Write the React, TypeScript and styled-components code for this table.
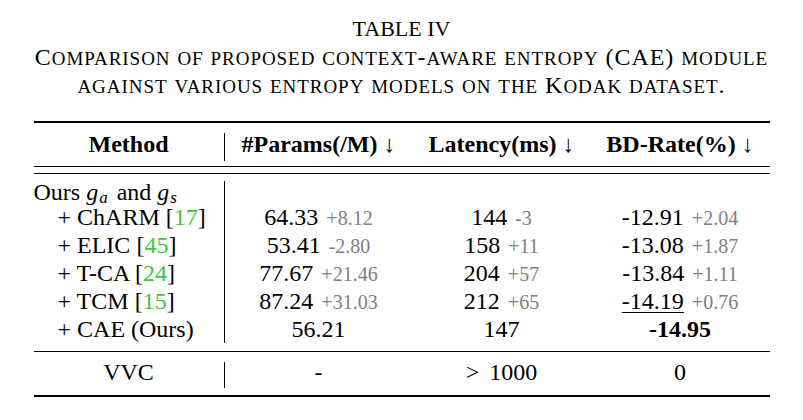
import React from "react";
import styled, { createGlobalStyle } from "styled-components";

const GlobalStyle = createGlobalStyle`
  html, body {
    margin: 0;
    padding: 0;
    background: #ffffff;
  }
  body {
    font-family: "Liberation Serif", "Times New Roman", serif;
    color: #000000;
  }
`;

const Page = styled.div`
  width: 803px;
  height: 420px;
  box-sizing: border-box;
  padding-top: 15px;
  display: flex;
  flex-direction: column;
  align-items: center;
  overflow: hidden;
`;

const Caption = styled.div`
  display: flex;
  flex-direction: column;
  align-items: center;
`;

const TableNumber = styled.div`
  font-size: 22px;
  height: 28px;
  line-height: 28px;
`;

const CaptionLine = styled.div`
  font-size: 24px;
  height: 28px;
  line-height: 28px;
  letter-spacing: 0.95px;
  white-space: nowrap;
`;

const SmallCap = styled.span`
  font-size: 19px;
  line-height: 1;
  text-transform: uppercase;
`;

const Table = styled.div`
  width: 736px;
  margin-top: 22px;
  border-top: 2px solid #000;
  border-bottom: 2px solid #000;
  font-size: 24px;
`;

const Section = styled.div<{ $top: number; $bottom: number; $gapAbove?: number; $ruleAbove?: boolean }>`
  padding: ${(p) => p.$top}px 0 ${(p) => p.$bottom}px;
  margin-top: ${(p) => p.$gapAbove ?? 0}px;
  border-top: ${(p) => (p.$ruleAbove ? "1px solid #000" : "none")};
  border-bottom: 1px solid #000;

  &:last-child {
    border-bottom: none;
  }
`;

const Row = styled.div<{ $height: number; $lineHeight: number }>`
  display: grid;
  grid-template-columns: 191px 188px 178px 179px;
  height: ${(p) => p.$height}px;
  line-height: ${(p) => p.$lineHeight}px;
`;

const MethodCell = styled.div<{ $indent?: boolean; $center?: boolean }>`
  border-right: 1px solid #000;
  padding-left: ${(p) => (p.$indent ? 24 : 0)}px;
  text-align: ${(p) => (p.$center ? "center" : "left")};
  white-space: nowrap;
`;

const Cell = styled.div`
  text-align: center;
  white-space: nowrap;
`;

const HeadCell = styled(Cell)`
  font-weight: bold;
`;

const HeadMethod = styled(MethodCell)`
  font-weight: bold;
`;

const Arrow = styled.span`
  font-weight: normal;
  margin-left: 6px;
`;

const Delta = styled.span`
  color: #808080;
  font-size: 20px;
  margin-left: 8px;
`;

const Cite = styled.span`
  color: #3cc83c;
`;

const MathVar = styled.i`
  display: inline-block;
  margin: 0 3px 0 6px;
`;

const Sub = styled.span`
  font-size: 17px;
  line-height: 1;
  position: relative;
  top: 3px;
  margin-left: 1px;
`;

const Gt = styled.span`
  margin-right: 10px;
`;

const Underlined = styled.span`
  text-decoration: underline;
  text-decoration-thickness: 1px;
  text-underline-offset: 3px;
`;

const Best = styled.span`
  font-weight: bold;
`;

// caption is set in small caps: capitals stay full size, the rest is shrunk capitals
const SmallCaps: React.FC<{ text: string }> = ({ text }) => (
  <>
    {text.split(/([^a-z]+)/).map((part, i) =>
      /[a-z]/.test(part) ? <SmallCap key={i}>{part}</SmallCap> : <span key={i}>{part}</span>
    )}
  </>
);

type Entry = { name: string; cite: string; params: string; dp: string; lat: string; dl: string; bd: string; db: string };

const entries: Entry[] = [
  { name: "ChARM", cite: "17", params: "64.33", dp: "+8.12", lat: "144", dl: "-3", bd: "-12.91", db: "+2.04" },
  { name: "ELIC", cite: "45", params: "53.41", dp: "-2.80", lat: "158", dl: "+11", bd: "-13.08", db: "+1.87" },
  { name: "T-CA", cite: "24", params: "77.67", dp: "+21.46", lat: "204", dl: "+57", bd: "-13.84", db: "+1.11" },
  { name: "TCM", cite: "15", params: "87.24", dp: "+31.03", lat: "212", dl: "+65", bd: "-14.19", db: "+0.76" },
];

export default function App() {
  return (
    <>
      <GlobalStyle />
      <Page>
        <Caption>
          <TableNumber>TABLE IV</TableNumber>
          <CaptionLine>
            <SmallCaps text="Comparison of proposed context-aware entropy (CAE) module" />
          </CaptionLine>
          <CaptionLine>
            <SmallCaps text="against various entropy models on the Kodak dataset." />
          </CaptionLine>
        </Caption>

        <Table>
          <Section $top={10} $bottom={5}>
            <Row $height={28} $lineHeight={23}>
              <HeadMethod $center>Method</HeadMethod>
              <HeadCell>#Params(/M)<Arrow>↓</Arrow></HeadCell>
              <HeadCell>Latency(ms)<Arrow>↓</Arrow></HeadCell>
              <HeadCell>BD-Rate(%)<Arrow>↓</Arrow></HeadCell>
            </Row>
          </Section>

          <Section $top={7} $bottom={8} $gapAbove={6} $ruleAbove>
            <Row $height={22} $lineHeight={22}>
              <MethodCell>
                Ours<MathVar>g<Sub>a</Sub></MathVar> and<MathVar>g<Sub>s</Sub></MathVar>
              </MethodCell>
              <Cell />
              <Cell />
              <Cell />
            </Row>
            {entries.map((e) => (
              <Row key={e.name} $height={28} $lineHeight={28}>
                <MethodCell $indent>
                  + {e.name} [<Cite>{e.cite}</Cite>]
                </MethodCell>
                <Cell>
                  {e.params}
                  <Delta>{e.dp}</Delta>
                </Cell>
                <Cell>
                  {e.lat}
                  <Delta>{e.dl}</Delta>
                </Cell>
                <Cell>
                  {e.name === "TCM" ? <Underlined>{e.bd}</Underlined> : e.bd}
                  <Delta>{e.db}</Delta>
                </Cell>
              </Row>
            ))}
            <Row $height={28} $lineHeight={28}>
              <MethodCell $indent>+ CAE (Ours)</MethodCell>
              <Cell>56.21</Cell>
              <Cell>147</Cell>
              <Cell>
                <Best>-14.95</Best>
              </Cell>
            </Row>
          </Section>

          <Section $top={10} $bottom={7}>
            <Row $height={26} $lineHeight={21}>
              <MethodCell $center>VVC</MethodCell>
              <Cell>-</Cell>
              <Cell>
                <Gt>&gt;</Gt>1000
              </Cell>
              <Cell>0</Cell>
            </Row>
          </Section>
        </Table>
      </Page>
    </>
  );
}
